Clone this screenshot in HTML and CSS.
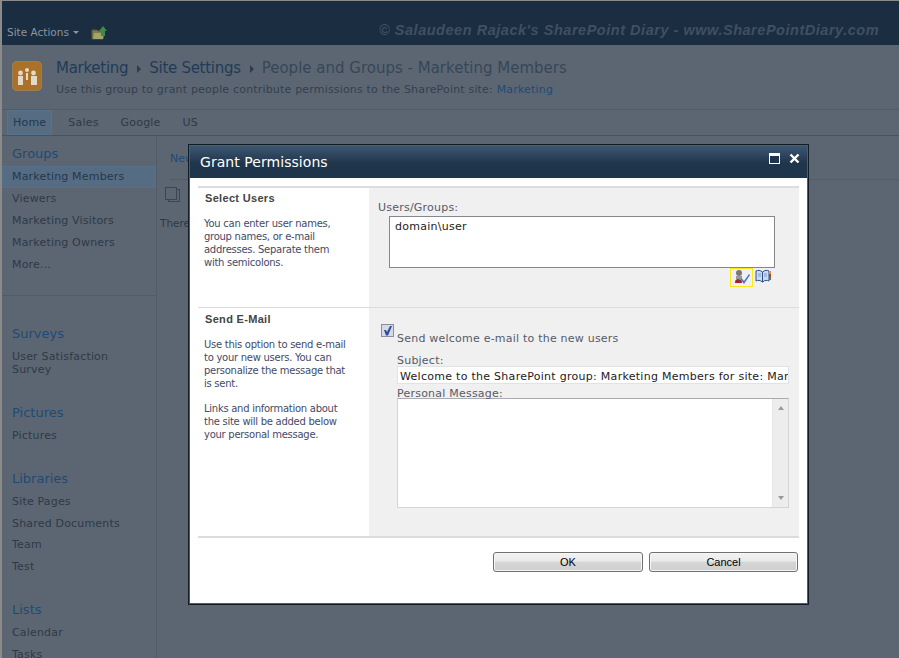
FILE: index.html
```html
<!DOCTYPE html>
<html lang="en">
<head>
<meta charset="utf-8">
<title>Grant Permissions</title>
<link rel="stylesheet" href="styles.css">
</head>
<body>
<div class="page">
  <header class="topbar">
    <div class="site-actions">Site Actions <span class="caret"></span></div>
    <svg class="up-icon" width="16" height="16" viewBox="0 0 16 16"><path d="M1 5h5l1 1h5v8H1z" fill="#7d7d45" stroke="#5a5a34"/><path d="M3 8h10l-1 6H2z" fill="#a3a36a"/><path d="M12 1l4 5h-2v5h-4V6H8z" fill="#3f8a4a"/></svg>
    <div class="watermark">© Salaudeen Rajack's SharePoint Diary - www.SharePointDiary.com</div>
  </header>
  <section class="titlerow">
    <div class="logo">
      <svg width="30" height="30" viewBox="0 0 30 30"><rect x="0.5" y="0.5" width="29" height="29" rx="4" fill="#aa7229" stroke="#9c7f4e"/><circle cx="15" cy="9" r="2" fill="#e4d9c4"/><circle cx="8.500" cy="12" r="2.400" fill="#e4d9c4"/><circle cx="21.500" cy="12" r="2.400" fill="#e4d9c4"/><rect x="6" y="15" width="5" height="9" fill="#e4d9c4"/><rect x="19" y="15" width="6" height="9" fill="#e4d9c4"/><rect x="14" y="12" width="2" height="7" fill="#e4d9c4"/></svg>
    </div>
    <div class="titletext">
      <h1 class="crumbs"><span class="crumb">Marketing</span><span class="sep"></span><span class="crumb">Site Settings</span><span class="sep"></span><span class="crumb-cur">People and Groups - Marketing Members</span></h1>
      <p class="desc">Use this group to grant people contribute permissions to the SharePoint site: <span class="link">Marketing</span></p>
    </div>
  </section>
  <nav class="tabs">
    <span class="tab tab-on">Home</span><span class="tab">Sales</span><span class="tab">Google</span><span class="tab">US</span>
  </nav>
  <div class="body">
    <aside class="nav">
      <div class="nav-top">
        <h3 class="nav-h first">Groups</h3>
        <div class="nav-item sel">Marketing Members</div>
        <div class="nav-item">Viewers</div>
        <div class="nav-item">Marketing Visitors</div>
        <div class="nav-item">Marketing Owners</div>
        <div class="nav-item">More...</div>
      </div>
      <h3 class="nav-h surveys">Surveys</h3>
      <div class="nav-item two">User Satisfaction Survey</div>
      <h3 class="nav-h">Pictures</h3>
      <div class="nav-item">Pictures</div>
      <h3 class="nav-h">Libraries</h3>
      <div class="nav-item">Site Pages</div>
      <div class="nav-item">Shared Documents</div>
      <div class="nav-item tight">Team</div>
      <div class="nav-item">Test</div>
      <h3 class="nav-h">Lists</h3>
      <div class="nav-item">Calendar</div>
      <div class="nav-item">Tasks</div>
    </aside>
    <main class="content">
      <div class="newrow"><span class="link">New</span></div>
      <svg class="copy-icon" width="16" height="16" viewBox="0 0 16 16"><rect x="3.500" y="2.500" width="11" height="12" fill="none" stroke="#3b4654"/><rect x="0.500" y="0.500" width="11" height="12" fill="#5c6672" stroke="#3b4654"/></svg>
      <div class="there">There</div>
    </main>
  </div>
</div>

<div class="dialog">
  <div class="dlg-title">
    <span class="dlg-name">Grant Permissions</span>
    <span class="dlg-btns">
      <svg width="11" height="11" viewBox="0 0 11 11"><rect x="0.500" y="0.500" width="10" height="10" fill="#1f354c" stroke="#fff"/><rect x="1" y="1" width="9" height="2" fill="#fff"/></svg>
      <svg width="11" height="11" viewBox="0 0 11 11"><path d="M1.500 1.500l8 8M9.500 1.500l-8 8" stroke="#fff" stroke-width="2.400"/></svg>
    </span>
  </div>
  <div class="dlg-body">
    <div class="form">
      <div class="fsec sec1">
        <div class="fleft">
          <h4 class="fh">Select Users</h4>
          <p class="fp">You can enter user names, group names, or e-mail addresses. Separate them with semicolons.</p>
        </div>
        <div class="fright">
          <div class="lbl lbl-users">Users/Groups:</div>
          <div class="peoplebox">domain\user</div>
          <div class="picker">
            <span class="chk-wrap"><svg width="18" height="16" viewBox="0 0 18 16"><circle cx="6" cy="4" r="3" fill="#777"/><path d="M3 7h6v3H3z" fill="#999"/><path d="M2 14c0-3 1-4 3-4s4 1 4 4z" fill="#a3202f"/><path d="M7 10l1.500-1L11 12l5-7 1 1-6 9z" fill="#4a76c8"/></svg></span>
            <svg class="book" width="16" height="14" viewBox="0 0 16 14"><path d="M1 2c2-1 4-1 6.500 1C10 1 12 1 14 2v10c-2-1-4-1-6.500 1C5 11 3 11 1 12z" fill="#c9dcf2" stroke="#2e4f86"/><path d="M7.500 3v10" stroke="#2e4f86"/><path d="M3 5h3M3 7h3M9 5h3M9 7h3" stroke="#7f9cc7"/><path d="M14 2h2v3h-2z" fill="#c9a02a"/><path d="M14 5h2v3h-2z" fill="#b63a3a"/><path d="M14 8h2v3h-2z" fill="#3d8a4a"/></svg>
          </div>
        </div>
      </div>
      <div class="fsec sec2">
        <div class="fleft">
          <h4 class="fh">Send E-Mail</h4>
          <p class="fp">Use this option to send e-mail to your new users. You can personalize the message that is sent.</p>
          <p class="fp fp2">Links and information about the site will be added below your personal message.</p>
        </div>
        <div class="fright fright2">
          <div class="sendrow">
            <span class="cb"><svg width="11" height="11" viewBox="0 0 11 11"><path d="M2 5h2l1 2 3-6h2L6 10.500H4z" fill="#2f4a9e"/></svg></span>
            <span class="lbl">Send welcome e-mail to the new users</span>
          </div>
          <div class="fields">
            <div class="lbl lbl-sub">Subject:</div>
            <div class="subject">Welcome to the SharePoint group: Marketing Members for site: Marketing</div>
            <div class="lbl lbl-msg">Personal Message:</div>
            <div class="message"><div class="scroll"><span class="arr up"></span><span class="arr down"></span></div></div>
          </div>
        </div>
      </div>
    </div>
    <div class="actions">
      <button class="btn btn-ok" type="button">OK</button>
      <button class="btn btn-cancel" type="button">Cancel</button>
    </div>
  </div>
</div>
</body>
</html>
```
FILE: styles.css
```css
* { box-sizing: border-box; }
html, body { margin: 0; padding: 0; height: 100%; overflow: hidden; }
body { background: #8b8b8b; font-family: "DejaVu Sans", sans-serif; color: #3a4554; position: relative; }
.page { height: 658px; margin-left: 2px; border-top: 1px solid #8b8b8b; display: flex; flex-direction: column; overflow: hidden; background: #5c6672; }
.topbar { height: 44px; background: #1b2d40; display: flex; align-items: flex-end; flex: none; padding-bottom: 5px; }
.site-actions { font-size: 10.5px; color: #8a96a3; margin: 0 0 1px 5px; line-height: 14px; width: 84px; }
.caret { display: inline-block; border: 3px solid transparent; border-top: 3px solid #8a96a3; margin-left: 1px; vertical-align: -1px; }
.up-icon { margin-bottom: -1px; }
.watermark { margin-left: 272px; font: italic bold 14.5px/18px "Liberation Sans", sans-serif; color: #3e5064; letter-spacing: 0.53px; white-space: nowrap; margin-bottom: 1px; }
.titlerow { height: 65px; display: flex; border-bottom: 1px solid #525c68; flex: none; }
.logo { margin: 16px 0 0 10px; width: 30px; }
.logo svg { display: block; }
.titletext { margin-left: 14px; padding-top: 13px; }
.crumbs { margin: 0; font-size: 15px; font-weight: normal; line-height: 20px; white-space: nowrap; display: flex; align-items: center; }
.crumb { color: #1f3b57; letter-spacing: -0.28px; }
.crumb-cur { color: #364657; }
.sep { width: 0; height: 0; border: 4px solid transparent; border-left: 4px solid #2d3b4b; border-right: 0; margin: 2px 8px 0 9px; }
.desc { margin: 5px 0 0; font-size: 11px; line-height: 14px; color: #333f4d; white-space: nowrap; letter-spacing: 0.18px; }
.link { color: #1f4a74; }
.tabs { height: 26px; border-bottom: 1px solid #485260; display: flex; flex: none; font-size: 11px; padding-left: 5px; letter-spacing: 0.2px; }
.tab { padding: 0 11px; line-height: 25px; color: #2e3946; }
.tab-on { background: #566c82; border: 1px solid #55738f; padding: 0 5px; line-height: 23px; margin-right: 11px; height: 25px; color: #24384d; }
.tab:nth-child(2) { padding-left: 5px; }
.body { display: flex; flex: 1; min-height: 0; }
.nav { width: 155px; border-right: 1px solid #525c68; flex: none; font-size: 11px; letter-spacing: 0.18px; }
.nav-top { border-bottom: 1px solid #525c68; height: 160px; padding-top: 9px; }
.nav-h { margin: 23px 0 4px 10px; font-size: 13px; font-weight: normal; line-height: 17px; color: #1f4a74; letter-spacing: 0; }
.nav-h.first { margin-top: 0; margin-bottom: 4px; }
.nav-h.surveys { margin-top: 29px; }
.nav-item { padding: 4px 0 5px 10px; line-height: 13px; color: #2e3946; white-space: nowrap; }
.nav-item.tight { padding-top: 3px; }
.nav-item.sel { background: #566c82; border: 1px solid #53708c; padding: 3px 0 4px 9px; height: 22px; color: #24384d; line-height: 14px; }
.nav-item.two { white-space: normal; width: 130px; }
.content { flex: 1; padding-left: 13px; font-size: 11px; }
.newrow { height: 44px; border-bottom: 1px solid #525c68; padding-top: 16px; line-height: 13px; }
.copy-icon { display: block; margin: 7px 0 0 -5px; }
.there { margin: 14px 0 0 -10px; color: #2e3946; font-size: 10.5px; }

.dialog { position: absolute; left: 188px; top: 144px; width: 621px; height: 461px; border: 1px solid #111c27; background: #fff; display: flex; flex-direction: column; box-shadow: inset 0 0 0 1px #0f6fb5; padding: 1px; }
.dlg-title { height: 32px; background: linear-gradient(#3d566f, #1f354c 55%); display: flex; justify-content: space-between; flex: none; padding-left: 10px; }
.dlg-name { color: #fff; font-size: 14px; line-height: 32px; letter-spacing: 0.05px; }
.dlg-btns { display: flex; gap: 9px; padding: 7px 7px 0 0; }
.dlg-btns svg { display: block; }
.dlg-body { flex: 1; padding: 8px 8px 0; display: flex; flex-direction: column; }
.form { border-top: 2px solid #dcdcdc; border-bottom: 2px solid #dcdcdc; }
.fsec { display: flex; }
.sec1 { height: 120px; border-bottom: 1px solid #dcdcdc; }
.sec2 { height: 228px; }
.fleft { width: 171px; flex: none; padding: 3px 0 0 6px; }
.sec2 .fleft { padding-top: 4px; }
.fh { margin: 0 0 12px 1px; font: bold 11px/14px "Liberation Sans", sans-serif; letter-spacing: 0.32px; color: #444; }
.fp { margin: 0; line-height: 13px; width: 145px; font-size: 10px; letter-spacing: -0.27px; color: #444a66; }
.fp2 { margin-top: 12px; }
.fright { flex: 1; min-width: 0; background: #f0f0f0; padding: 13px 0 0 9px; font-size: 11px; color: #555b68; letter-spacing: 0.22px; }
.lbl { line-height: 13px; white-space: nowrap; color: #555b68; }
.lbl-users { margin-bottom: 2px; }
.peoplebox { margin-left: 11px; height: 52px; width: 386px; background: #fff; border: 1px solid #85878c; color: #222; padding: 3px 5px; line-height: 13px; letter-spacing: 0.27px; }
.picker { margin-left: 352px; display: flex; gap: 2px; }
.chk-wrap { border: 1px solid #ffe81a; width: 23px; height: 19px; display: block; padding-left: 2px; }
.chk-wrap svg { display: block; }
.book { margin-top: 1px; }
.fright2 { padding: 16px 0 0 12px; }
.sendrow { display: flex; align-items: flex-end; gap: 3px; }
.cb { width: 13px; height: 13px; border: 1px solid #8d8f96; background: #d4dae8; display: block; margin-bottom: 8px; }
.cb svg { display: block; }
.fields { margin-left: 16px; margin-top: 9px; }
.lbl-sub { height: 12px; }
.subject { height: 18px; background: #fff; border: 1px solid #dfe2e6; color: #222; padding-left: 2px; line-height: 19px; overflow: hidden; white-space: nowrap; width: 392px; margin-bottom: 2px; letter-spacing: 0.28px; }
.lbl-msg { height: 12px; line-height: 15px; }
.message { height: 110px; width: 392px; background: #fff; border: 1px solid #d5d5d8; border-top-color: #a9a9b0; display: flex; justify-content: flex-end; }
.scroll { width: 16px; background: #ededed; border-left: 1px solid #e6e6e6; display: flex; flex-direction: column; justify-content: space-between; align-items: center; padding: 7px 0; }
.arr { width: 0; height: 0; border: 3.5px solid transparent; }
.arr.up { border-bottom: 4px solid #9a9a9a; border-top: 0; }
.arr.down { border-top: 4px solid #9a9a9a; border-bottom: 0; }
.actions { display: flex; justify-content: flex-end; gap: 6px; padding: 14px 1px 0 0; }
.btn { height: 20px; border: 1px solid #707070; border-radius: 3px; background: linear-gradient(#f2f2f2 0, #ebebeb 45%, #d6d6d6 50%, #cfcfcf 100%); font: 11px "Liberation Sans", sans-serif; color: #000; padding: 0; box-shadow: inset 0 0 0 1px #f6f6f6; }
.btn-ok { width: 150px; }
.btn-cancel { width: 149px; }
```
